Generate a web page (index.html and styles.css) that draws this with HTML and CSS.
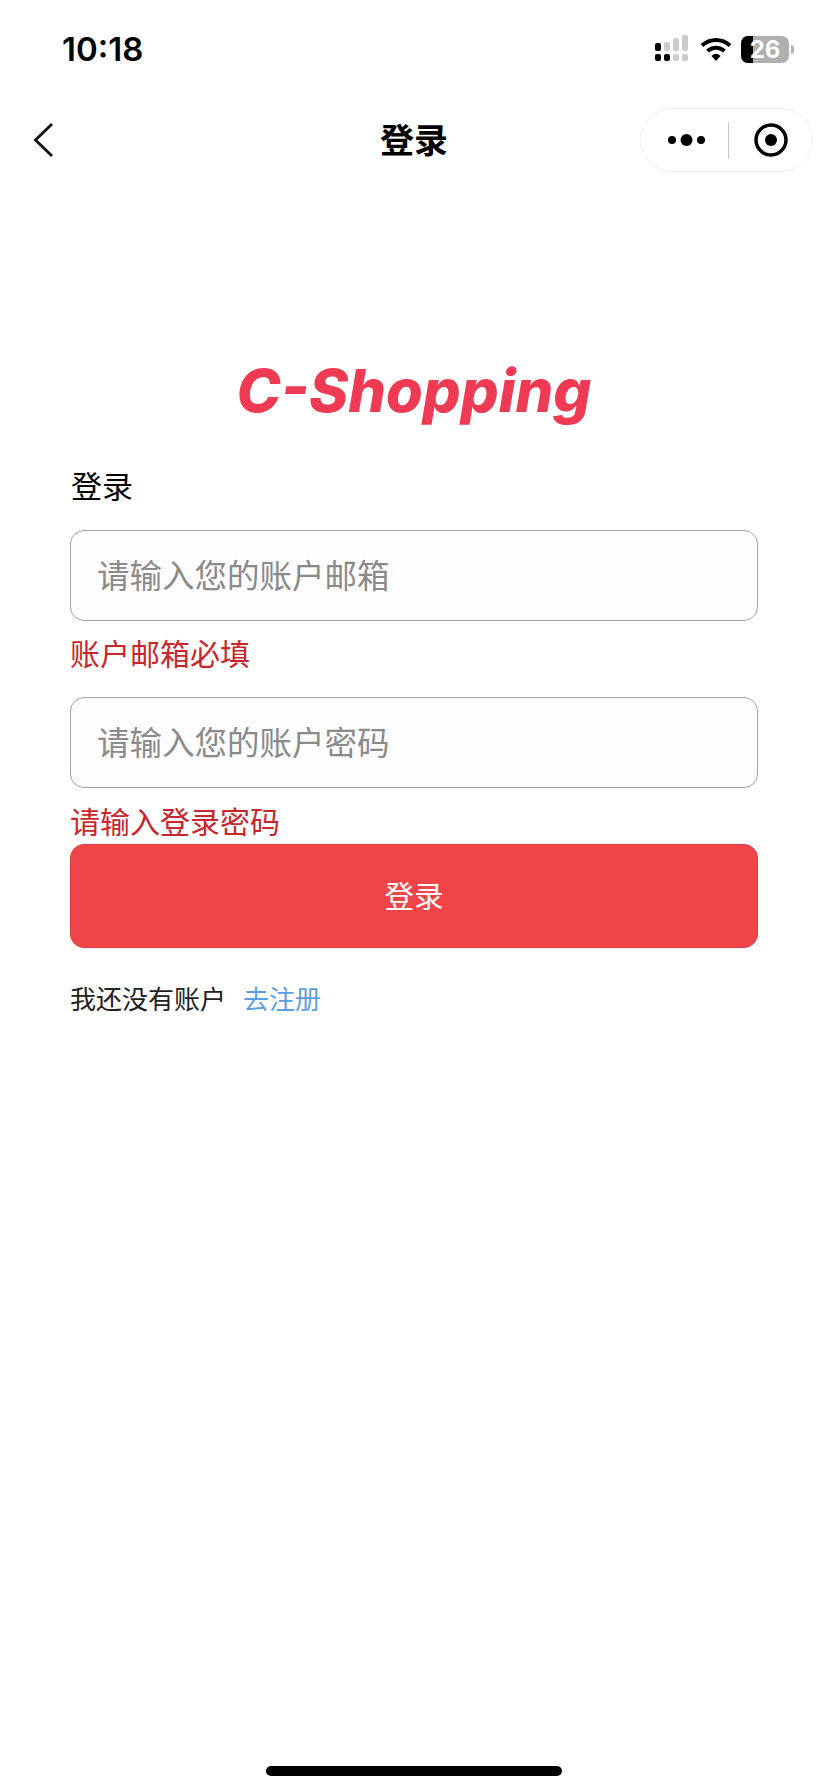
FILE: index.html
```html
<!DOCTYPE html>
<html lang="zh-CN">
<head>
<meta charset="utf-8">
<title>登录</title>
<link rel="stylesheet" href="styles.css">
</head>
<body>
<div class="page">
  <header class="status">
    <span class="time">10:18</span>
    <div class="status-icons">
      <svg class="sig" width="36" height="28" viewBox="0 0 36 28">
        <rect x="0" y="8" width="6" height="8" rx="2" fill="#000"/>
        <rect x="0" y="19" width="6" height="7" rx="2" fill="#000"/>
        <rect x="9" y="19" width="6" height="7" rx="2" fill="#000"/>
        <rect x="9" y="7" width="6" height="9" rx="2" fill="#ccc"/>
        <rect x="18" y="3" width="6" height="13" rx="2" fill="#ccc"/>
        <rect x="18" y="19" width="6" height="7" rx="2" fill="#ccc"/>
        <rect x="27" y="0" width="6" height="16" rx="2" fill="#ccc"/>
        <rect x="27" y="19" width="6" height="7" rx="2" fill="#ccc"/>
      </svg>
      <svg class="wifi" width="32" height="25" viewBox="0 0 32 25">
        <path d="M2 8.500C10 1 22 1 30 8.500" fill="none" stroke="#000" stroke-width="4"/>
        <path d="M7.500 14C12.500 9.500 19.500 9.500 24.500 14" fill="none" stroke="#000" stroke-width="4"/>
        <path d="M11.500 19C14.500 16 17.500 16 20.500 19L16 24Z" fill="#000"/>
      </svg>
      <div class="battery"><div class="battery-fill"></div><span class="battery-num">26</span></div>
      <span class="battery-tip"></span>
    </div>
  </header>
  <nav class="nav">
    <svg class="back" width="22" height="36" viewBox="0 0 22 36">
      <path d="M19 2L2.500 18L19 34" fill="none" stroke="#111" stroke-width="2.800"/>
    </svg>
    <h1 class="nav-title">登录</h1>
    <div class="capsule">
      <svg width="38" height="14" viewBox="0 0 38 14">
        <circle cx="4" cy="7" r="4" fill="#000"/><circle cx="18.500" cy="7" r="6" fill="#000"/><circle cx="33" cy="7" r="4" fill="#000"/>
      </svg>
      <span class="cap-div"></span>
      <svg width="34" height="34" viewBox="0 0 34 34">
        <circle cx="17" cy="17" r="15" fill="none" stroke="#000" stroke-width="3.500"/><circle cx="17" cy="17" r="6" fill="#000"/>
      </svg>
    </div>
  </nav>
  <main class="main">
    <div class="logo">C-Shopping</div>
    <div class="heading">登录</div>
    <div class="field">请输入您的账户邮箱</div>
    <div class="error err-first">账户邮箱必填</div>
    <div class="field">请输入您的账户密码</div>
    <div class="error err-second">请输入登录密码</div>
    <button class="submit">登录</button>
    <p class="foot"><span>我还没有账户</span><a class="link">去注册</a></p>
  </main>
  <div class="home"></div>
</div>
</body>
</html>
```
FILE: styles.css
```css
* { box-sizing: border-box; }
html, body { margin: 0; padding: 0; background: #fff; }
body { font-family: "Noto Sans CJK SC", "Inter", sans-serif; color: #000; }
.page { width: 828px; height: 1792px; display: flex; flex-direction: column; overflow: hidden; }

.status { height: 100px; padding: 26px 0 0 62px; display: flex; justify-content: space-between; align-items: flex-start; }
.time { font-family: "Inter", sans-serif; font-weight: 600; font-size: 33px; line-height: 46px; }
.status-icons { display: flex; align-items: center; padding: 2px 34px 0 0; height: 44px; }
.wifi { margin-left: 9px; }
.battery { position: relative; margin-left: 9px; width: 48px; height: 27px; border-radius: 7px; background: #b0b0b0; overflow: hidden; display: flex; align-items: center; justify-content: center; }
.battery-fill { position: absolute; left: 0; top: 0; bottom: 0; width: 12px; background: #000; }
.battery-num { position: relative; font-family: "Inter", sans-serif; font-weight: 700; font-size: 24px; line-height: 27px; color: #fff; }
.battery-tip { margin-left: 2px; width: 3px; height: 9px; background: #b0b0b0; border-radius: 0 3px 3px 0; }

.nav { height: 80px; position: relative; display: flex; align-items: center; justify-content: space-between; padding: 0 15px 0 33px; }
.back { display: block; margin-top: -1px; }
.nav-title { position: absolute; left: 0; right: 0; top: 16px; margin: 0; text-align: center; font-size: 34px; line-height: 46px; font-weight: 700; }
.capsule { width: 173px; height: 64px; border: 1.500px solid #eee; border-radius: 32px; background: #fff; display: flex; align-items: center; padding-left: 26.500px; }
.cap-div { width: 1px; height: 37px; background: #c8c8c8; margin: 0 25px 0 22px; }

.main { flex: 1; padding: 174px 70px 0; display: flex; flex-direction: column; }
.logo { font-family: "Inter", sans-serif; font-style: italic; font-weight: 800; font-size: 59.500px; line-height: 72px; text-align: center; color: #ee3a52; }
.heading { font-size: 31px; line-height: 40px; margin: 39px 0 0 1px; }
.field { height: 91px; margin-top: 25px; border: 1px solid #a3a3a3; border-radius: 14px; background: #fdfdfd; padding: 0 0 5px 26px; display: flex; align-items: center; font-size: 32.500px; color: #8a8a8a; }
.error { font-size: 30px; line-height: 40px; margin-left: 0; color: #c9252d; }
.err-first { margin-top: 11px; }
.err-second { margin-top: 12px; }
.err-first + .field { margin-top: 25px; }
.submit { height: 104px; width: 100%; margin-top: 4px; border: 1px solid #dc3c42; border-radius: 14px; background: #f14448; color: #fff; font: inherit; font-size: 29.500px; padding-bottom: 5px; }
.foot { margin: 32px 0 0; font-size: 26px; line-height: 36px; color: #222; display: flex; gap: 17px; }
.link { color: #5b9fe2; }

.home { width: 296px; height: 10px; border-radius: 5px; background: #000; margin: 0 auto 16px; }
```
